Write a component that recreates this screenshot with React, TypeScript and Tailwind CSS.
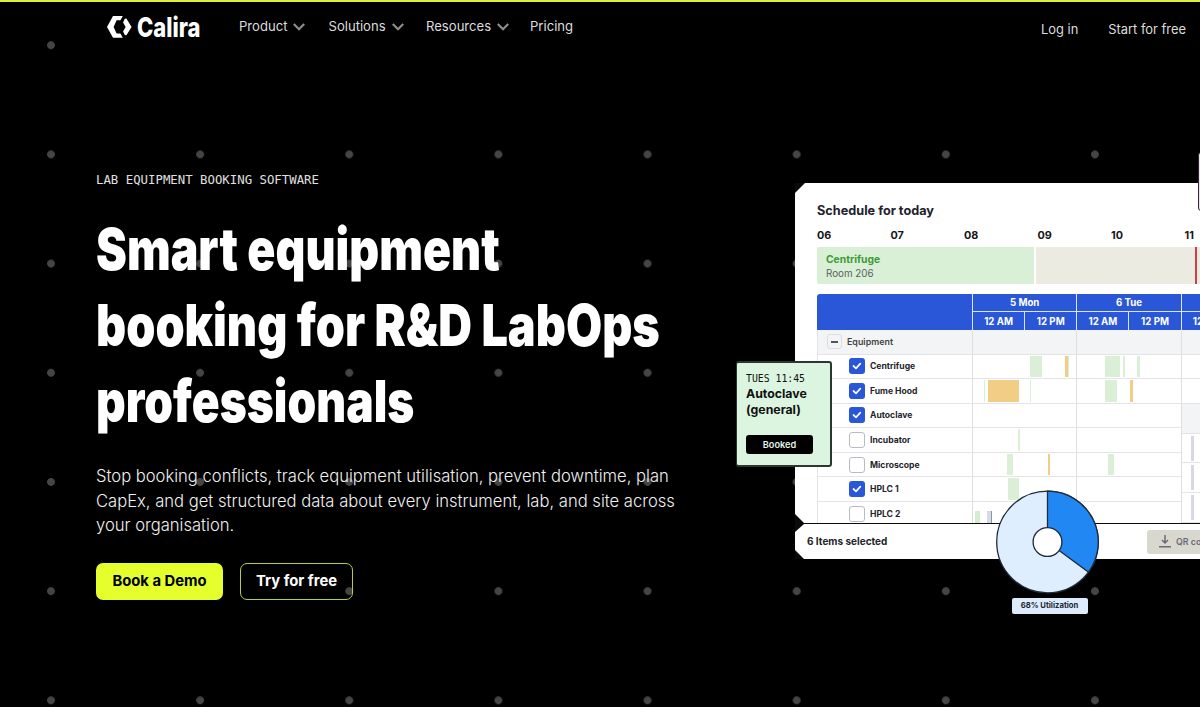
interface Block {
  left: number;
  width: number;
  tone: 'green' | 'amber';
}

interface Row {
  name: string;
  checked: boolean;
  blocks: Block[];
}

const TONE = {
  green: 'bg-[#daefd5]',
  amber: 'bg-[#f2cd85]',
};

const HOURS = ['06', '07', '08', '09', '10', '11'];

const ROWS: Row[] = [
  {
    name: 'Centrifuge', checked: true,
    blocks: [
      { left: 57.5, width: 12, tone: 'green' },
      { left: 93, width: 3, tone: 'amber' },
      { left: 96, width: 1, tone: 'green' },
      { left: 133, width: 15, tone: 'green' },
      { left: 151, width: 2, tone: 'green' },
      { left: 165, width: 3, tone: 'green' },
    ],
  },
  {
    name: 'Fume Hood', checked: true,
    blocks: [
      { left: 12, width: 1, tone: 'green' },
      { left: 16, width: 31, tone: 'amber' },
      { left: 58, width: 1, tone: 'green' },
      { left: 133, width: 12, tone: 'green' },
      { left: 158, width: 3, tone: 'amber' },
    ],
  },
  { name: 'Autoclave', checked: true, blocks: [] },
  { name: 'Incubator', checked: false, blocks: [{ left: 46, width: 2, tone: 'green' }] },
  {
    name: 'Microscope', checked: false,
    blocks: [
      { left: 35, width: 6, tone: 'green' },
      { left: 76, width: 2, tone: 'amber' },
      { left: 136, width: 6, tone: 'green' },
    ],
  },
  { name: 'HPLC 1', checked: true, blocks: [{ left: 36, width: 11, tone: 'green' }] },
  { name: 'HPLC 2', checked: false, blocks: [] },
];

function Logo() {
  return (
    <div className="flex h-7 w-[96px] items-center gap-[5px] text-white">
      <svg width="25" height="22" viewBox="0 0 25 22" fill="currentColor" className="shrink-0">
        <path d="M6 0h9.8l-2.4 4.2H9.6L6.6 11l3 6.6h3.8l2.4 4.2H6L0 11z" />
        <path d="M17.8 2.8 19.4 2.6 24.6 11l-5.2 8.2-1.6-.2-1.7-3.6L18.6 11l-2.5-4.4z" />
      </svg>
      <span className="origin-left scale-x-[0.8] pt-0.5 text-[27.5px] font-extrabold leading-none">Calira</span>
    </div>
  );
}

function NavItem({ label, menu = true }: { label: string; menu?: boolean }) {
  return (
    <a className="flex items-center gap-1.5 text-[13.1px] text-[#dcdcdc]">
      {label}
      {menu && (
        <svg width="12" height="8" viewBox="0 0 12 8" fill="none" stroke="#8d8d8d" strokeWidth="2.2">
          <path d="M.8 1 6 6.3 11.2 1" />
        </svg>
      )}
    </a>
  );
}

function Header() {
  return (
    <header className="flex h-[58px] border-t-2 border-[#dfee3a] pl-24">
      <div className="flex flex-1 items-start bg-black pl-[11px] pt-[11px]">
        <Logo />
        <nav className="ml-9 flex h-7 items-center">
          <div className="w-[89.5px]"><NavItem label="Product" /></div>
          <div className="w-[97.5px]"><NavItem label="Solutions" /></div>
          <div className="w-[104px]"><NavItem label="Resources" /></div>
          <NavItem label="Pricing" menu={false} />
        </nav>
        <div className="ml-auto mr-3.5 mt-[3px] flex h-7 items-center gap-[30px] text-[12.9px] text-[#dcdcdc]">
          <a>Log in</a>
          <a>Start for free</a>
        </div>
      </div>
    </header>
  );
}

function Intro() {
  return (
    <section className="w-[640px] shrink-0 pl-24 pt-[114px]">
      <p className="whitespace-nowrap font-['DejaVu_Sans_Mono',monospace] text-[12.35px] leading-4 text-[#e0e0e0]">
        LAB EQUIPMENT BOOKING SOFTWARE
      </p>
      <h1 className="mt-[23px] text-[58px] font-black leading-[76.2px] text-white">
        <span className="block origin-left scale-x-[0.8] whitespace-nowrap">Smart equipment</span>
        <span className="block origin-left scale-x-[0.806] whitespace-nowrap">booking for R&amp;D LabOps</span>
        <span className="block origin-left scale-x-[0.794] whitespace-nowrap">professionals</span>
      </h1>
      <p className="mt-[24.5px] whitespace-nowrap text-[16.6px] font-[350] leading-[24.5px] text-[#f0f0f0]">
        Stop booking conflicts, track equipment utilisation, prevent downtime, plan<br />
        CapEx, and get structured data about every instrument, lab, and site across<br />
        your organisation.
      </p>
      <div className="mt-[25.5px] flex gap-[17px] text-[14.8px] font-bold">
        <button className="h-[37px] w-[127px] rounded-[7px] bg-[#e5ff2c] pb-0.5 text-black">Book a Demo</button>
        <button className="h-[37px] w-[113px] rounded-[7px] border border-[#b9cc3c] pb-0.5 text-white">Try for free</button>
      </div>
    </section>
  );
}

function Checkbox({ checked }: { checked: boolean }) {
  if (!checked) return <span className="size-4 rounded-[3px] border border-[#b9bac6] bg-white" />;
  return (
    <span className="flex size-4 items-center justify-center rounded-[3px] bg-[#2a56d8]">
      <svg width="10" height="8" viewBox="0 0 10 8" fill="none" stroke="white" strokeWidth="1.7" strokeLinecap="round" strokeLinejoin="round">
        <path d="M1.5 4 4 6.3 8.3 1.7" />
      </svg>
    </span>
  );
}

function DayHead({ label }: { label: string }) {
  return (
    <div className="w-[104.3px] shrink-0 border-l border-[#dbe5ff] text-center text-[9.7px] font-bold text-white">
      <div className="h-[18px] border-b border-[#dbe5ff] leading-[18px]">{label}</div>
      <div className="flex h-[18px] leading-[19px]">
        <span className="flex-1 border-r border-[#dbe5ff]">12 AM</span>
        <span className="flex-1">12 PM</span>
      </div>
    </div>
  );
}

function Calendar() {
  return (
    <div className="relative ml-[22px] mt-2.5 w-[460px]">
      <div className="flex h-9 overflow-hidden rounded-tl-[3px] bg-[#2a56d8]">
        <div className="w-[155px] shrink-0" />
        <DayHead label="5 Mon" />
        <DayHead label="6 Tue" />
        <DayHead label="" />
      </div>
      <div className="flex h-[24.5px] border-b border-l border-[#e3e3e8] bg-[#f3f4f6]">
        <div className="flex w-[154px] items-center gap-[5px] pl-[9px] text-[8.9px] font-semibold text-[#444]">
          <span className="flex size-[15px] items-center justify-center rounded-[3px] border border-[#dedee2]">
            <span className="h-[1.5px] w-[7px] bg-[#555]" />
          </span>
          Equipment
        </div>
        <span className="w-[104.3px] border-l border-[#dddfe3]" />
        <span className="w-[104.3px] border-l border-[#dddfe3]" />
        <span className="border-l border-[#dddfe3]" />
      </div>
      {ROWS.map((row) => (
        <div key={row.name} className="flex h-[24.57px] border-b border-l border-[#e3e3e8]">
          <div className="flex w-[154px] shrink-0 items-center gap-[5px] pl-[31px] text-[8.6px] font-bold text-[#24242c]">
            <Checkbox checked={row.checked} />
            <span className="pt-px">{row.name}</span>
          </div>
          <div className="relative flex flex-1">
            <span className="w-[104.3px] border-l border-[#dddfe3]" />
            <span className="w-[104.3px] border-l border-[#dddfe3]" />
            <span className="border-l border-[#dddfe3]" />
            {row.blocks.map((b) => (
              <i key={b.left} className={`absolute bottom-px top-px ${TONE[b.tone]}`} style={{ left: b.left, width: b.width }} />
            ))}
          </div>
        </div>
      ))}
      {/* second lab's rows start further down and run taller */}
      <div className="absolute left-[364px] top-[109.5px] w-24 border-l border-[#dddfe3] bg-white">
        <div className="h-[30px] border-b border-[#e3e3e8] bg-[#f3f4f6]" />
        {[0, 1, 2].map((n) => (
          <div key={n} className="h-[29.8px] border-b border-[#e3e3e8] pl-[9px] pt-0.5">
            <div className="h-[25px] w-[3px] bg-[#d9d6e6]" />
          </div>
        ))}
      </div>
      <i className="absolute left-[158px] top-[217px] h-3 w-[5px] bg-[#d5edcf]" />
      <i className="absolute left-[170px] top-[217px] h-3 w-[5px] border-r border-[#8c93a3] bg-[#d4dbe6]" />
    </div>
  );
}

function Schedule() {
  return (
    <div className="flex h-[376px] w-[464px] flex-col bg-[#0b0b0b]">
      <div className="h-[340px] overflow-hidden bg-white [clip-path:polygon(10px_0,100%_0,100%_100%,9px_100%,0_331px,0_10px)]">
        <h2 className="ml-[22px] mt-5 text-[12.7px] font-bold leading-4 text-[#22222c]">Schedule for today</h2>
        <div className="ml-[22px] mt-[9px] flex text-[10.8px] font-bold leading-4 text-[#15151b]">
          {HOURS.map((h) => <span key={h} className="w-[73.5px] shrink-0">{h}</span>)}
        </div>
        <div className="ml-[22px] mt-[3px] flex h-[37px] gap-0.5">
          <div className="w-[217px] shrink-0 rounded-l-[2px] bg-[#daf0d6] pl-[9px] pt-1.5 leading-[13.5px]">
            <div className="text-[10.3px] font-bold text-[#3e9b3b]">Centrifuge</div>
            <div className="text-[9.8px] text-[#56635e]">Room 206</div>
          </div>
          <div className="w-[161px] shrink-0 border-r-2 border-[#c9404a] bg-[#ecebe1]" />
          <div className="-ml-0.5 w-20 shrink-0 bg-[#ecebe1]" />
        </div>
        <Calendar />
      </div>
      <div className="flex flex-1 items-center bg-white pl-3 pt-px text-[10px] font-bold text-[#24242c] [clip-path:polygon(9px_1px,100%_1px,100%_100%,9px_100%,0_27px,0_9px)]">
        6 Items selected
        <div className="ml-auto mr-[-30px] flex h-6 w-[142px] items-center gap-[5px] rounded-[3px] bg-[#d8d8cf] pl-3 text-[8.8px] font-semibold text-[#6b6b7a]">
          <svg width="12" height="13" viewBox="0 0 12 13" fill="none" stroke="currentColor" strokeWidth="1.5">
            <path d="M6 0v8M3 5l3 3 3-3M0 11.8h12" />
          </svg>
          QR codes
        </div>
      </div>
    </div>
  );
}

function BookingCard() {
  return (
    <div className="absolute left-0 top-[178px] h-[106px] w-24 rounded-[3px] border-2 border-l border-[#2c372f] bg-[#dcf5e0] pl-[9px] pt-[9px] text-[#111]">
      <div className="font-['DejaVu_Sans_Mono',monospace] text-[9.8px] leading-[14px]">TUES 11:45</div>
      <div className="text-[12.3px] font-bold leading-4">Autoclave<br />(general)</div>
      <div className="mt-[17px] h-[19px] w-[67px] rounded-[3px] bg-black text-center text-[9.2px] font-semibold leading-[19px] text-[#e3f2e5]">Booked</div>
    </div>
  );
}

function Utilization() {
  return (
    <div className="absolute left-[260px] top-[307px] flex w-[104px] flex-col items-center">
      <svg width="104" height="104" viewBox="-51.5 -52 104 104" stroke="#1d2b3a" strokeWidth="1.3">
        <circle r="50.8" fill="#deeeff" />
        <path d="M0 0V-50.8A50.8 50.8 0 0 1 40.9 30.1Z" fill="#2188f3" />
        <circle r="14.4" fill="#fff" />
      </svg>
      <div className="ml-[3px] mt-[4px] h-4 w-[76px] whitespace-nowrap rounded-[2px] bg-[#dcecfd] text-center text-[7.7px] font-bold leading-4 text-[#1c2530]">
        68% Utilization
      </div>
    </div>
  );
}

export default function App() {
  return (
    <div className="h-[707px] w-[1200px] overflow-hidden bg-black bg-[radial-gradient(circle,#454545_3.5px,transparent_4.3px)] bg-[length:149.15px_109.2px] bg-[position:-23.6px_-9.4px] font-['Inter',sans-serif]">
      <Header />
      <main className="flex">
        <Intro />
        <section className="relative ml-24 mt-[125px] h-[440px] w-[464px] shrink-0 overflow-hidden">
          <div className="ml-[59px]"><Schedule /></div>
          <BookingCard />
          <Utilization />
        </section>
        <div className="relative -ml-0.5 mt-[94px] h-[59px] w-24 shrink-0 rounded-[3px] border border-[#2c2830] bg-[#f4dff0]" />
      </main>
    </div>
  );
}
